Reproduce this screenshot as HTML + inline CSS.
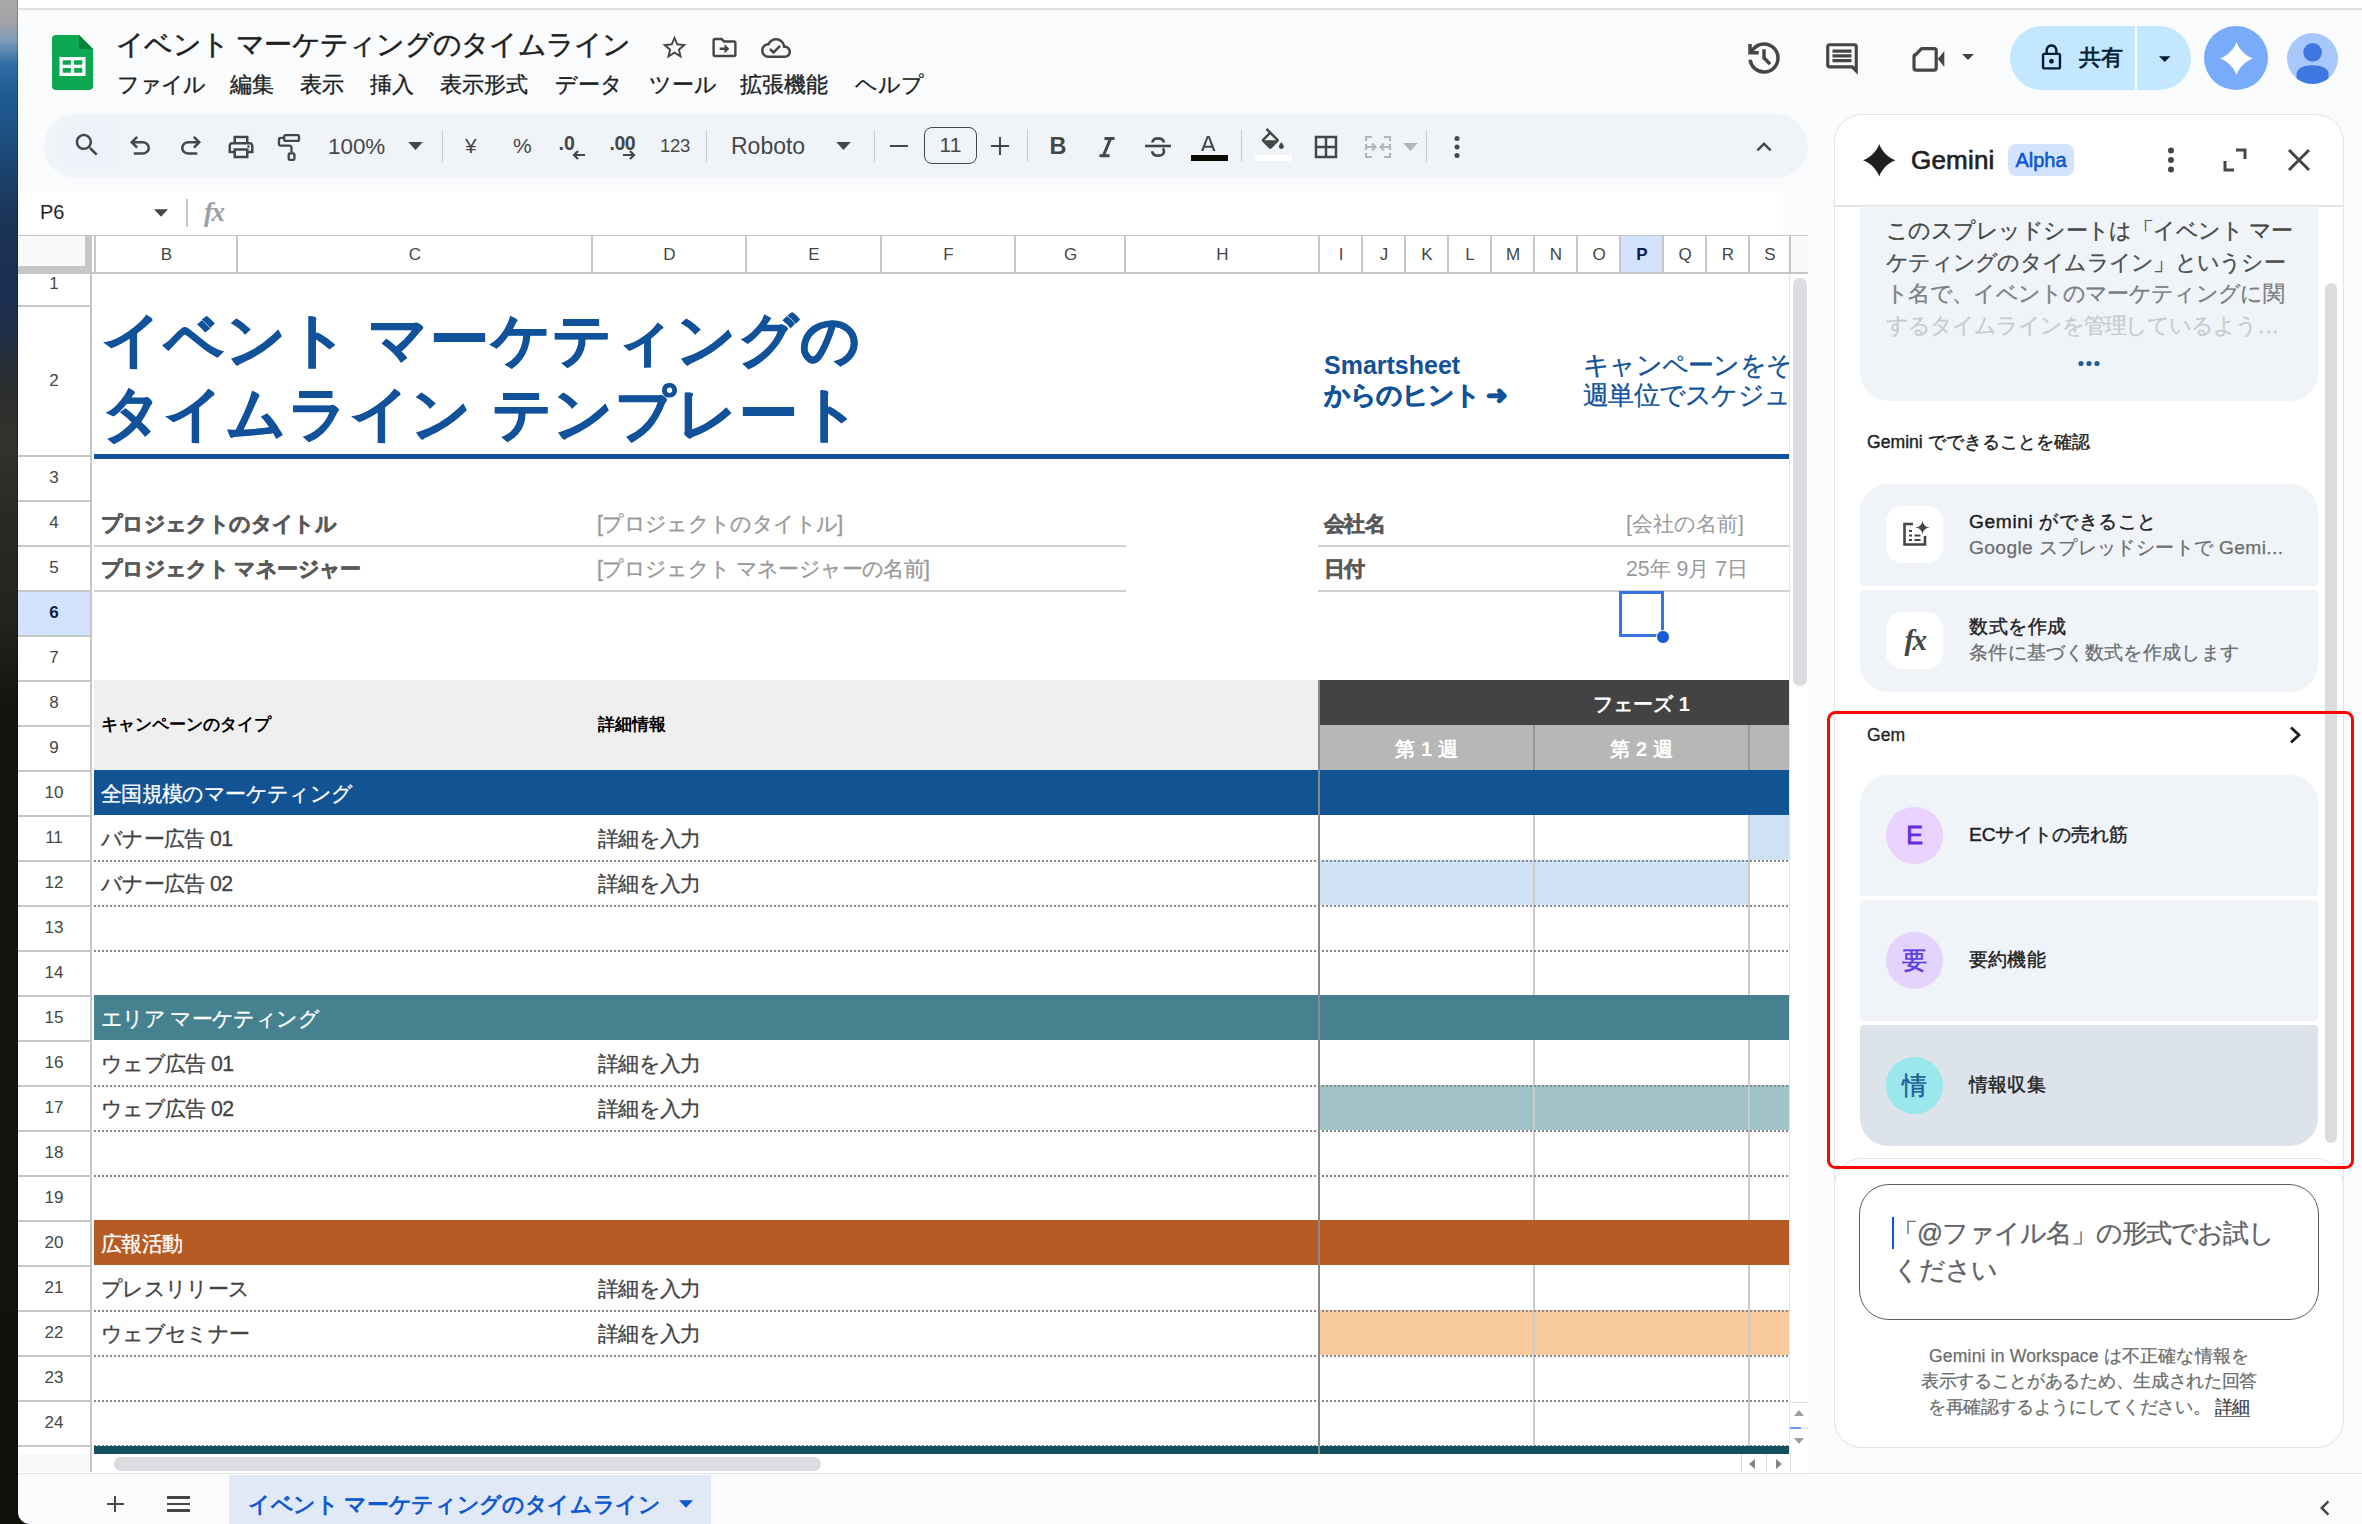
<!DOCTYPE html>
<html lang="ja">
<head>
<meta charset="utf-8">
<title>イベント マーケティングのタイムライン - Google スプレッドシート</title>
<style>
*{box-sizing:border-box;margin:0;padding:0}
html,body{width:2362px;height:1524px;overflow:hidden;background:#f9fbfd}
body{position:relative;font-family:"Liberation Sans",sans-serif;color:#1f1f1f;-webkit-font-smoothing:antialiased}
.abs{position:absolute}
.t{position:absolute;white-space:nowrap;line-height:1}
svg{position:absolute;overflow:visible}
.ic{fill:#444746}
.st{fill:none;stroke:#444746;stroke-width:2.6;stroke-linecap:butt;stroke-linejoin:miter}
/* left wallpaper strip */
#wall{left:0;top:0;width:18px;height:1524px;background:linear-gradient(180deg,#a9aaab 0px,#a3a4a6 22px,#7f9dbd 40px,#2e6aa3 66px,#1f5c93 95px,#1d4a7a 150px,#1b3458 215px,#1b2f52 290px,#20304a 330px,#2b2e2e 385px,#33332d 440px,#2a2a24 520px,#24231d 620px,#15140e 700px,#12110b 1524px)}
#wall:after{content:"";position:absolute;right:0;top:0;width:1px;height:100%;background:rgba(0,0,0,.25)}
#topwhite{left:18px;top:0;width:2344px;height:8px;background:#fff}
#topline{left:18px;top:8px;width:2344px;height:2px;background:#e0e0e0}
/* menu */
.menu{top:73px;font-size:22.4px;height:24px;line-height:24px;color:#1f1f1f;-webkit-text-stroke:.35px #1f1f1f}
/* toolbar */
#tb{left:44px;top:114px;width:1764px;height:64px;border-radius:32px;background:#f0f4f9}
.sep{position:absolute;top:130px;width:1.2px;height:32px;background:#c7c9cc}
.tbt{color:#444746}
/* grid */
.ch{position:absolute;top:236px;height:36px;line-height:37px;text-align:center;font-size:17px;color:#444746;background:#fff;border-right:2px solid #c4c7c5}
.rh{position:absolute;left:18px;width:72px;text-align:center;font-size:17px;color:#444746;background:#fff;border-bottom:2px solid #c4c7c5}
.cell{position:absolute;white-space:nowrap;font-size:21.3px;color:#434343;height:45px;line-height:46px}
.dot{position:absolute;height:2px;background-image:repeating-linear-gradient(90deg,#888 0,#888 2px,transparent 2px,transparent 4px)}
.j{letter-spacing:-.03em;-webkit-text-stroke:.3px currentColor}
.jb{-webkit-text-stroke:.55px currentColor}
.vl{position:absolute;width:2px;background:#ccc}
/* gemini */
.card{position:absolute;left:1860px;width:458px;background:#f0f4f9}
.ct{position:absolute;left:1969px;white-space:nowrap;font-size:19.2px;line-height:24px;height:24px;letter-spacing:-.5px}
.gc{position:absolute;left:1886px;width:57px;height:57px;border-radius:50%;text-align:center;line-height:57px;font-size:25px}
</style>
</head>
<body>
<div id="wall" class="abs"></div>
<div id="topwhite" class="abs"></div>
<div id="topline" class="abs"></div>
<!-- ===== Title bar ===== -->
<svg style="left:52px;top:35px" width="41" height="55" viewBox="0 0 41 55">
  <path d="M4 0H27L41 14V51a4 4 0 0 1-4 4H4a4 4 0 0 1-4-4V4a4 4 0 0 1 4-4Z" fill="#0ca750"/>
  <path d="M27 0L41 14H30a3 3 0 0 1-3-3Z" fill="#08813c"/>
  <path d="M7.5 22h26v19h-26Zm3.200 3.200v4.600h8.200v-4.600Zm11.400 0v4.600h8.200v-4.600Zm-11.400 7.800v4.800h8.200v-4.800Zm11.400 0v4.800h8.200v-4.800Z" fill="#fff" fill-rule="evenodd"/>
</svg>
<div class="t" style="left:116px;top:28px;font-size:28px;letter-spacing:-.75px;height:34px;line-height:34px;color:#1f1f1f;-webkit-text-stroke:.5px #1f1f1f">イベント マーケティングのタイムライン</div>
<svg class="ic" style="left:660px;top:33px" width="29" height="29" viewBox="0 0 24 24"><path d="M22 9.240l-7.190-.62L12 2 9.190 8.630 2 9.240l5.460 4.730L5.820 21 12 17.270 18.180 21l-1.630-7.030L22 9.240zM12 15.400l-3.760 2.270 1-4.280-3.320-2.880 4.380-.38L12 6.100l1.710 4.040 4.380.38-3.320 2.880 1 4.280L12 15.400z"/></svg>
<svg class="ic" style="left:710px;top:33px" width="29" height="29" viewBox="0 0 24 24"><path d="M20 6h-8l-2-2H4c-1.100 0-2 .9-2 2v12c0 1.100.9 2 2 2h16c1.100 0 2-.9 2-2V8c0-1.100-.9-2-2-2zm0 12H4V6h5.170l2 2H20v10zm-8.010-1l4-4-4-4v3h-4v2h4v3z"/></svg>
<svg class="ic" style="left:761px;top:33px" width="30" height="30" viewBox="0 0 24 24"><path d="M19.350 10.040C18.670 6.590 15.640 4 12 4 9.110 4 6.600 5.640 5.350 8.040 2.340 8.360 0 10.910 0 14c0 3.310 2.690 6 6 6h13c2.760 0 5-2.240 5-5 0-2.640-2.050-4.780-4.650-4.960zM19 18H6c-2.210 0-4-1.790-4-4 0-2.050 1.530-3.760 3.560-3.970l1.070-.11.5-.95C8.080 7.140 9.940 6 12 6c2.620 0 4.880 1.860 5.390 4.430l.3 1.500 1.530.11c1.560.1 2.780 1.410 2.780 2.960 0 1.650-1.350 3-3 3zm-9-3.820l-2.090-2.090L6.500 13.500 10 17l6.010-6.010-1.410-1.410z"/></svg>
<!-- menu -->
<div class="t menu" style="left:117px;letter-spacing:-1px">ファイル</div>
<div class="t menu" style="left:230px">編集</div>
<div class="t menu" style="left:300px">表示</div>
<div class="t menu" style="left:370px">挿入</div>
<div class="t menu" style="left:440px">表示形式</div>
<div class="t menu" style="left:555px">データ</div>
<div class="t menu" style="left:649px">ツール</div>
<div class="t menu" style="left:740px">拡張機能</div>
<div class="t menu" style="left:855px">ヘルプ</div>
<!-- right icons -->
<svg class="ic" style="left:1743px;top:36.700px" width="42" height="42" viewBox="0 -960 960 960"><path d="M480-120q-138 0-240.500-91.500T122-440h82q14 104 92.500 172T480-200q117 0 198.500-81.500T760-480q0-117-81.500-198.500T480-760q-69 0-129 32t-101 88h110v80H120v-240h80v94q51-64 124.500-99T480-840q75 0 140.500 28.500t114 77q48.500 48.500 77 114T840-480q0 75-28.500 140.500t-77 114q-48.500 48.500-114 77T480-120Zm112-192L440-464v-216h80v184l128 128-56 56Z"/></svg>
<svg class="ic" style="left:1823.200px;top:39.600px" width="38" height="38" viewBox="0 -960 960 960"><path d="M240-400h480v-80H240v80Zm0-120h480v-80H240v80Zm0-120h480v-80H240v80ZM880-80 720-240H160q-33 0-56.500-23.500T80-320v-480q0-33 23.500-56.500T160-880h640q33 0 56.500 23.500T880-800v720ZM160-320h594l46 45v-525H160v480Z" fill-rule="evenodd"/></svg>
<svg style="left:1910px;top:44px" width="38" height="30" viewBox="0 0 38 30"><path d="M5.500 10.800L10.800 5.300a2 2 0 0 1 1.400-.6H24.200a2 2 0 0 1 2 2V24.100a2 2 0 0 1-2 2H6a2 2 0 0 1-2-2V12.200a2 2 0 0 1 .6-1.400Z" fill="none" stroke="#444746" stroke-width="3.200"/><path d="M27.800 14.900L34.300 7v16Z" fill="#444746"/></svg>
<svg class="ic" style="left:1962px;top:54px" width="12" height="6" viewBox="0 0 10 5"><path d="M0 0h10L5 5Z"/></svg>
<!-- share -->
<div class="abs" style="left:2010px;top:26px;width:181px;height:64px;border-radius:32px;background:#c2e7ff"></div>
<div class="abs" style="left:2135px;top:26px;width:2px;height:64px;background:#f9fbfd"></div>
<svg style="left:2037.200px;top:42.600px" width="29" height="29" viewBox="0 0 24 24" fill="#001d35"><path d="M18 8h-1V6c0-2.760-2.240-5-5-5S7 3.240 7 6v2H6c-1.100 0-2 .9-2 2v10c0 1.100.9 2 2 2h12c1.100 0 2-.9 2-2V10c0-1.100-.9-2-2-2zM9 6c0-1.660 1.340-3 3-3s3 1.340 3 3v2H9V6zm9 14H6V10h12v10zm-6-3c1.100 0 2-.9 2-2s-.9-2-2-2-2 .9-2 2 .9 2 2 2z"/></svg>
<div class="t" style="left:2079px;top:43.500px;font-size:22.400px;letter-spacing:-.4px;height:28px;line-height:28px;color:#001d35;-webkit-text-stroke:.7px #001d35">共有</div>
<svg style="left:2159.400px;top:55.600px" width="11.500" height="6" viewBox="0 0 10 5" fill="#001d35"><path d="M0 0h10L5 5Z"/></svg>
<!-- gemini button -->
<div class="abs" style="left:2204px;top:26px;width:64px;height:64px;border-radius:50%;background:#79abfb"></div>
<svg style="left:2219.500px;top:41.800px" width="33" height="33" viewBox="0 0 24 24" fill="#fff"><path d="M12 0C13.500 5 19 10.500 24 12 19 13.500 13.500 19 12 24 10.500 19 5 13.500 0 12 5 10.500 10.500 5 12 0Z"/></svg>
<!-- avatar -->
<div class="abs" style="left:2287px;top:32.500px;width:51px;height:51px;border-radius:50%;background:#a8c7fa;overflow:hidden"><svg style="left:0;top:0" width="51" height="51" viewBox="0 0 51 51" fill="#3c78e0"><circle cx="25.600" cy="19.300" r="9.300"/><path d="M9.600 41c0-5.500 7-8.700 16-8.700s16 3.200 16 8.700V55H9.600Z"/></svg></div>
<!-- ===== Toolbar ===== -->
<div id="tb" class="abs"></div>
<div class="abs" style="left:58px;top:124px;width:60px;height:44px;border-radius:22px 4px 4px 22px;background:#edf1f9"></div>
<svg class="ic" style="left:72px;top:130px" width="30" height="30" viewBox="0 0 24 24"><path d="M15.500 14h-.79l-.28-.27C15.410 12.590 16 11.110 16 9.500 16 5.910 13.090 3 9.500 3S3 5.910 3 9.500 5.910 16 9.500 16c1.610 0 3.090-.59 4.230-1.570l.27.28v.79l5 4.990L20.490 19l-4.990-5zm-6 0C7.010 14 5 11.990 5 9.500S7.010 5 9.500 5 14 7.010 14 9.500 11.990 14 9.500 14z"/></svg>
<svg class="ic" style="left:125px;top:131px" width="30" height="30" viewBox="0 -960 960 960"><path d="M280-200v-80h284q63 0 109.500-40T720-420q0-60-46.500-100T564-560H312l104 104-56 56-200-200 200-200 56 56-104 104h252q97 0 166.500 63T800-420q0 94-69.500 157T564-200H280Z"/></svg>
<svg class="ic" style="left:176px;top:131px" width="30" height="30" viewBox="0 -960 960 960"><path d="M396-200q-97 0-166.500-63T160-420q0-94 69.500-157T396-640h252L544-744l56-56 200 200-200 200-56-56 104-104H396q-63 0-109.500 40T240-420q0 60 46.500 100T396-280h284v80H396Z"/></svg>
<svg class="ic" style="left:226px;top:132px" width="30" height="30" viewBox="0 0 24 24"><path d="M19 8h-1V3H6v5H5c-1.660 0-3 1.340-3 3v6h4v4h12v-4h4v-6c0-1.660-1.340-3-3-3zM8 5h8v3H8V5zm8 14H8v-4h8v4zm2-4v-2H6v2H4v-4c0-.55.45-1 1-1h14c.55 0 1 .45 1 1v4h-2z"/><circle cx="18" cy="11.500" r="1"/></svg>
<svg style="left:270px;top:125px" width="40" height="40" viewBox="0 0 40 40" fill="none" stroke="#444746" stroke-width="2.300"><rect x="14.200" y="10.200" width="14.800" height="5.600" rx="1.400"/><path d="M14.200 12.900H10.600a1.600 1.600 0 0 0-1.600 1.600V19a1.600 1.600 0 0 0 1.600 1.600H19.300a2.200 2.200 0 0 1 2.200 2.200V27.500"/><rect x="18.700" y="28.300" width="5.700" height="6.600" rx="1.200"/></svg>
<div class="t tbt" style="left:328px;top:134px;font-size:22.4px;height:26px;line-height:26px">100%</div>
<svg class="ic" style="left:408px;top:142px" width="15" height="8" viewBox="0 0 10 5.500"><path d="M0 0h10L5 5.500Z"/></svg>
<div class="sep" style="left:442px"></div>
<div class="t tbt" style="left:465px;top:133px;font-size:21px;height:26px;line-height:26px">¥</div>
<div class="t tbt" style="left:513px;top:133px;font-size:21px;height:26px;line-height:26px">%</div>
<div class="t tbt" style="left:558.500px;top:129.500px;font-size:19.500px;font-weight:bold;height:26px;line-height:26px">.0</div>
<svg class="st" style="left:572px;top:150px" width="14" height="10" viewBox="0 0 14 10"><path d="M13 5H2M6 1L2 5l4 4" stroke-width="2.200"/></svg>
<div class="t tbt" style="left:609.500px;top:129.500px;font-size:19.500px;font-weight:bold;height:26px;line-height:26px;letter-spacing:-.5px">.00</div>
<svg class="st" style="left:622px;top:150px" width="14" height="10" viewBox="0 0 14 10"><path d="M1 5h11M8 1l4 4-4 4" stroke-width="2.200"/></svg>
<div class="t tbt" style="left:660px;top:133px;font-size:18.500px;height:26px;line-height:26px;letter-spacing:-.3px">123</div>
<div class="sep" style="left:706px"></div>
<div class="t tbt" style="left:731px;top:133px;font-size:23px;height:26px;line-height:26px">Roboto</div>
<svg class="ic" style="left:836px;top:142px" width="15" height="8" viewBox="0 0 10 5.500"><path d="M0 0h10L5 5.500Z"/></svg>
<div class="sep" style="left:874px"></div>
<div class="abs" style="left:890px;top:145px;width:18px;height:2.200px;background:#444746"></div>
<div class="abs" style="left:924px;top:127px;width:53px;height:37px;border:1.500px solid #444746;border-radius:8px"></div>
<div class="t tbt" style="left:924px;top:132px;width:53px;text-align:center;font-size:21px;height:26px;line-height:26px">11</div>
<div class="abs" style="left:991px;top:145px;width:18px;height:2.200px;background:#444746"></div>
<div class="abs" style="left:998.900px;top:137px;width:2.200px;height:18px;background:#444746"></div>
<div class="sep" style="left:1027px"></div>
<div class="t tbt" style="left:1049.500px;top:132px;font-size:23.500px;font-weight:bold;height:28px;line-height:28px">B</div>
<svg style="left:1095px;top:134px" width="24" height="26" viewBox="0 0 24 26" fill="none" stroke="#444746" stroke-width="2.700"><path d="M9.500 4.400H19.500M4.500 21.800H14.500M15.600 4.400L8.400 21.800" stroke-width="3"/></svg>
<svg style="left:1144px;top:133px" width="28" height="28" viewBox="0 0 28 28"><path d="M20 9.500C19.500 6.800 17 5.300 14 5.300S8.500 6.900 8.500 9.500M8 18.200c.6 2.900 3 4.500 6 4.500s6-1.500 6-4.300c0-1.200-.5-2.200-1.300-2.900" fill="none" stroke="#444746" stroke-width="2.700"/><rect x="1" y="11.700" width="26" height="2.600" fill="#444746"/></svg>
<svg class="ic" style="left:1201px;top:135.500px" width="14.500" height="15.300" viewBox="0 0 19 20"><path d="M7.700 0L0 19.500h3.100l1.560-4.200h9.680l1.560 4.200H19L11.300 0H7.700zM5.680 12.600L9.500 2.400l3.820 10.200H5.680z"/></svg>
<div class="abs" style="left:1191px;top:155px;width:37px;height:6px;background:#0a0a00"></div>
<div class="sep" style="left:1241px"></div>
<svg class="ic" style="left:1258px;top:128.300px" width="29.500" height="29.500" viewBox="0 0 24 24"><path d="M16.560 8.940L7.620 0 6.210 1.410l2.380 2.380-5.150 5.150c-.59.59-.59 1.540 0 2.120l5.500 5.500c.29.29.68.44 1.060.44s.77-.15 1.060-.44l5.500-5.500c.59-.58.59-1.530 0-2.120zM5.210 10L10 5.210 14.790 10H5.210zM19 11.500s-2 2.170-2 3.500c0 1.100.9 2 2 2s2-.9 2-2c0-1.330-2-3.500-2-3.500z"/></svg>
<div class="abs" style="left:1255px;top:155px;width:37px;height:6px;background:#fff"></div>
<svg class="ic" style="left:1311px;top:132px" width="30" height="30" viewBox="0 0 24 24"><path d="M3 3v18h18V3H3zm8 16H5v-6h6v6zm0-8H5V5h6v6zm8 8h-6v-6h6v6zm0-8h-6V5h6v6z"/></svg>
<svg style="left:1364px;top:135px" width="28" height="24" viewBox="0 0 28 24" fill="none" stroke="#b4b6b5" stroke-width="2.200"><path d="M8 2H2v4M2 9v6M2 18v4h6M20 2h6v4M26 9v6M26 18v4h-6M2 12h9M8 8.500l3.500 3.500L8 15.500M26 12h-9M20 8.500L16.500 12l3.500 3.500"/></svg>
<svg style="left:1403px;top:143px" width="15" height="8" viewBox="0 0 10 5.500" fill="#b4b6b5"><path d="M0 0h10L5 5.500Z"/></svg>
<div class="sep" style="left:1426px"></div>
<svg class="ic" style="left:1452.700px;top:135px" width="8" height="26" viewBox="0 0 8 26"><circle cx="4" cy="3.500" r="2.500"/><circle cx="4" cy="12" r="2.500"/><circle cx="4" cy="20.500" r="2.500"/></svg>
<svg class="ic" style="left:1749px;top:132px" width="30" height="30" viewBox="0 0 24 24"><path d="M12 8l-6 6 1.410 1.410L12 10.830l4.590 4.580L18 14z"/></svg>
<!-- ===== Formula bar ===== -->
<div class="abs" style="left:18px;top:191px;width:1765px;height:44px;background:#fff"></div>
<div class="t" style="left:40px;top:200px;font-size:20px;height:24px;line-height:24px;color:#1f1f1f">P6</div>
<svg class="ic" style="left:154px;top:208.500px" width="14" height="8" viewBox="0 0 10 5.500"><path d="M0 0h10L5 5.500Z"/></svg>
<div class="abs" style="left:186px;top:199px;width:1.500px;height:28px;background:#c7c7c7"></div>
<div class="t" style="left:204px;top:197px;font-family:'Liberation Serif',serif;font-style:italic;font-size:27px;height:30px;line-height:30px;color:#9aa0a6;letter-spacing:-1.500px;font-weight:bold">fx</div>
<!-- ===== Grid ===== -->
<div class="abs" style="left:18px;top:235px;width:1790px;height:1239px;background:#fff"></div>
<div class="abs" style="left:18px;top:235px;width:1790px;height:39px;background:#f8f9fa;border-top:1.5px solid #c4c7c5;border-bottom:2px solid #c4c7c5"></div>
<div class="abs" style="left:18px;top:236px;width:74px;height:37px;background:#f8f9fa;border-right:7px solid #c4c7c5;border-bottom:7px solid #c4c7c5"></div>
<div class="abs" style="left:92px;top:236px;width:2px;height:36px;background:#fff"></div>
<div class="abs" style="left:94px;top:236px;width:2px;height:36px;background:#c4c7c5"></div>
<div class="ch" style="left:96px;width:142px;padding-left:1px">B</div>
<div class="ch" style="left:238px;width:355px;padding-left:1px">C</div>
<div class="ch" style="left:593px;width:154px;padding-left:1px">D</div>
<div class="ch" style="left:747px;width:135px;padding-left:1px">E</div>
<div class="ch" style="left:882px;width:134px;padding-left:1px">F</div>
<div class="ch" style="left:1016px;width:110px;padding-left:1px">G</div>
<div class="ch" style="left:1126px;width:194px;padding-left:1px">H</div>
<div class="ch" style="left:1320px;width:43px;padding-left:1px">I</div>
<div class="ch" style="left:1363px;width:43px;padding-left:1px">J</div>
<div class="ch" style="left:1406px;width:43px;padding-left:1px">K</div>
<div class="ch" style="left:1449px;width:43px;padding-left:1px">L</div>
<div class="ch" style="left:1492px;width:43px;padding-left:1px">M</div>
<div class="ch" style="left:1535px;width:43px;padding-left:1px">N</div>
<div class="ch" style="left:1578px;width:43px;padding-left:1px">O</div>
<div class="ch" style="left:1621px;width:43px;background:#d3e3fd;color:#041e49;font-weight:bold;padding-left:1px">P</div>
<div class="ch" style="left:1664px;width:43px;padding-left:1px">Q</div>
<div class="ch" style="left:1707px;width:43px;padding-left:1px">R</div>
<div class="ch" style="left:1750px;width:41px;padding-left:1px">S</div>
<div class="abs" style="left:18px;top:274px;width:74px;height:1200px;background:#fff;border-right:2px solid #c4c7c5"></div>
<div class="rh" style="top:274px;height:33px;line-height:20px">1</div>
<div class="rh" style="top:307px;height:150px;line-height:147px">2</div>
<div class="rh" style="top:457px;height:45px;line-height:42px">3</div>
<div class="rh" style="top:502px;height:45px;line-height:42px">4</div>
<div class="rh" style="top:547px;height:45px;line-height:42px">5</div>
<div class="rh" style="top:592px;height:45px;line-height:42px;background:#d3e3fd;color:#041e49;font-weight:bold">6</div>
<div class="rh" style="top:637px;height:45px;line-height:42px">7</div>
<div class="rh" style="top:682px;height:45px;line-height:42px">8</div>
<div class="rh" style="top:727px;height:45px;line-height:42px">9</div>
<div class="rh" style="top:772px;height:45px;line-height:42px">10</div>
<div class="rh" style="top:817px;height:45px;line-height:42px">11</div>
<div class="rh" style="top:862px;height:45px;line-height:42px">12</div>
<div class="rh" style="top:907px;height:45px;line-height:42px">13</div>
<div class="rh" style="top:952px;height:45px;line-height:42px">14</div>
<div class="rh" style="top:997px;height:45px;line-height:42px">15</div>
<div class="rh" style="top:1042px;height:45px;line-height:42px">16</div>
<div class="rh" style="top:1087px;height:45px;line-height:42px">17</div>
<div class="rh" style="top:1132px;height:45px;line-height:42px">18</div>
<div class="rh" style="top:1177px;height:45px;line-height:42px">19</div>
<div class="rh" style="top:1222px;height:45px;line-height:42px">20</div>
<div class="rh" style="top:1267px;height:45px;line-height:42px">21</div>
<div class="rh" style="top:1312px;height:45px;line-height:42px">22</div>
<div class="rh" style="top:1357px;height:45px;line-height:42px">23</div>
<div class="rh" style="top:1402px;height:45px;line-height:42px">24</div>
<div class="rh" style="top:1447px;height:33px;line-height:30px">25</div>
<div class="t" style="left:102px;top:302.7px;font-size:58.6px;color:#11529a;height:74px;line-height:74px;-webkit-text-stroke:2.9px #11529a;paint-order:stroke fill;text-shadow:.7px 0 #11529a,-.7px 0 #11529a,0 .7px #11529a,0 -.7px #11529a;letter-spacing:1.9px">イベント マーケティングの</div>
<div class="t" style="left:102px;top:376.5px;font-size:58.6px;color:#11529a;height:74px;line-height:74px;-webkit-text-stroke:2.9px #11529a;paint-order:stroke fill;text-shadow:.7px 0 #11529a,-.7px 0 #11529a,0 .7px #11529a,0 -.7px #11529a;letter-spacing:1.9px">タイムライン テンプレート</div>
<div class="t" style="left:1324px;top:350px;font-size:25px;font-weight:bold;color:#11529a;height:30px;line-height:30px">Smartsheet</div>
<div class="t" style="left:1324px;top:380px;font-size:25.5px;font-weight:bold;color:#11529a;height:30px;line-height:30px;letter-spacing:-1px;-webkit-text-stroke:.5px #11529a">からのヒント ➜</div>
<div class="abs" style="left:1583px;top:350px;width:206px;height:60px;overflow:hidden"><div class="t" style="left:0;top:0;font-size:25.5px;color:#11529a;height:30px;line-height:30px;letter-spacing:-.75px;-webkit-text-stroke:.3px #11529a">キャンペーンをそれぞれ</div><div class="t" style="left:0;top:30px;font-size:25.5px;color:#11529a;height:30px;line-height:30px;letter-spacing:-.75px;-webkit-text-stroke:.3px #11529a">週単位でスケジュール</div></div>
<div class="abs" style="left:94px;top:454px;width:1695px;height:4.5px;background:#11529a"></div>
<div class="cell j jb" style="left:101px;top:501px;font-weight:bold;color:#595959">プロジェクトのタイトル</div>
<div class="cell j" style="left:597px;top:501px;color:#999">[プロジェクトのタイトル]</div>
<div class="cell j jb" style="left:1324px;top:501px;font-weight:bold;color:#595959">会社名</div>
<div class="cell" style="left:1626px;top:501px;color:#999">[会社の名前]</div>
<div class="abs" style="left:94px;top:545px;width:1032px;height:2px;background:#cfcfcf"></div>
<div class="abs" style="left:1318px;top:545px;width:471px;height:2px;background:#cfcfcf"></div>
<div class="cell j jb" style="left:101px;top:546px;font-weight:bold;color:#595959">プロジェクト マネージャー</div>
<div class="cell j" style="left:597px;top:546px;color:#999">[プロジェクト マネージャーの名前]</div>
<div class="cell j jb" style="left:1324px;top:546px;font-weight:bold;color:#595959">日付</div>
<div class="cell" style="left:1626px;top:546px;color:#999">25年 9月 7日</div>
<div class="abs" style="left:94px;top:590px;width:1032px;height:2px;background:#cfcfcf"></div>
<div class="abs" style="left:1318px;top:590px;width:471px;height:2px;background:#cfcfcf"></div>
<div class="abs" style="left:94px;top:680px;width:1225px;height:90px;background:#efefef"></div>
<div class="t" style="left:101px;top:713px;font-size:17px;font-weight:bold;color:#000;height:24px;line-height:24px">キャンペーンのタイプ</div>
<div class="t" style="left:598px;top:713px;font-size:17px;font-weight:bold;color:#000;height:24px;line-height:24px">詳細情報</div>
<div class="abs" style="left:1319px;top:680px;width:470px;height:45px;background:#434343"></div>
<div class="abs" style="left:1319px;top:725px;width:470px;height:45px;background:#b7b7b7"></div>
<div class="t" style="left:1534px;top:691px;width:215px;text-align:center;font-size:20px;font-weight:bold;color:#fff;height:26px;line-height:26px">フェーズ 1</div>
<div class="t" style="left:1319px;top:736px;width:215px;text-align:center;font-size:20px;font-weight:bold;color:#fff;height:26px;line-height:26px">第 1 週</div>
<div class="t" style="left:1534px;top:736px;width:215px;text-align:center;font-size:20px;font-weight:bold;color:#fff;height:26px;line-height:26px">第 2 週</div>
<div class="vl" style="left:1533px;top:725px;height:45px;background:#999"></div>
<div class="vl" style="left:1748px;top:725px;height:45px;background:#999"></div>
<div class="abs" style="left:1749px;top:815px;width:40px;height:45px;background:#cfe2f3"></div>
<div class="abs" style="left:1320px;top:860px;width:429px;height:45px;background:#cfe2f3"></div>
<div class="abs" style="left:1320px;top:1085px;width:469px;height:45px;background:#a2c4c9"></div>
<div class="abs" style="left:1320px;top:1310px;width:469px;height:45px;background:#f9cb9c"></div>
<div class="vl" style="left:1533px;top:770px;height:676px"></div>
<div class="vl" style="left:1748px;top:770px;height:676px"></div>
<div class="abs" style="left:94px;top:770px;width:1695px;height:45px;background:#125394"></div>
<div class="cell j" style="left:101px;top:771px;color:#fff">全国規模のマーケティング</div>
<div class="cell j" style="left:101px;top:816px">バナー広告 01</div>
<div class="cell j" style="left:598px;top:816px">詳細を入力</div>
<div class="dot" style="left:94px;top:860px;width:1695px"></div>
<div class="cell j" style="left:101px;top:861px">バナー広告 02</div>
<div class="cell j" style="left:598px;top:861px">詳細を入力</div>
<div class="dot" style="left:94px;top:905px;width:1695px"></div>
<div class="dot" style="left:94px;top:950px;width:1695px"></div>
<div class="abs" style="left:94px;top:995px;width:1695px;height:45px;background:#45818e"></div>
<div class="cell j" style="left:101px;top:996px;color:#fff">エリア マーケティング</div>
<div class="cell j" style="left:101px;top:1041px">ウェブ広告 01</div>
<div class="cell j" style="left:598px;top:1041px">詳細を入力</div>
<div class="dot" style="left:94px;top:1085px;width:1695px"></div>
<div class="cell j" style="left:101px;top:1086px">ウェブ広告 02</div>
<div class="cell j" style="left:598px;top:1086px">詳細を入力</div>
<div class="dot" style="left:94px;top:1130px;width:1695px"></div>
<div class="dot" style="left:94px;top:1175px;width:1695px"></div>
<div class="abs" style="left:94px;top:1220px;width:1695px;height:45px;background:#b55b23"></div>
<div class="cell j" style="left:101px;top:1221px;color:#fff">広報活動</div>
<div class="cell j" style="left:101px;top:1266px">プレスリリース</div>
<div class="cell j" style="left:598px;top:1266px">詳細を入力</div>
<div class="dot" style="left:94px;top:1310px;width:1695px"></div>
<div class="cell j" style="left:101px;top:1311px">ウェブセミナー</div>
<div class="cell j" style="left:598px;top:1311px">詳細を入力</div>
<div class="dot" style="left:94px;top:1355px;width:1695px"></div>
<div class="dot" style="left:94px;top:1400px;width:1695px"></div>
<div class="dot" style="left:94px;top:1445px;width:1695px"></div>
<div class="abs" style="left:94px;top:1446px;width:1695px;height:8px;background:#134f5c"></div>
<div class="abs" style="left:1318px;top:680px;width:2px;height:774px;background:#8a8a8a"></div>
<div class="abs" style="left:1619px;top:591px;width:45px;height:46px;border:3px solid #3a73e4"></div>
<div class="abs" style="left:1656px;top:629.5px;width:14px;height:14px;border-radius:50%;background:#1b57d9;border:1px solid #fff"></div>
<div class="abs" style="left:1789px;top:274px;width:1px;height:1180px;background:#e3e3e3"></div>
<div class="abs" style="left:1793px;top:278px;width:14px;height:408px;border-radius:7px;background:#dadce0"></div>
<div class="abs" style="left:1790px;top:1402px;width:18px;height:52px;border-top:1px solid #dadce0"></div>
<div class="abs" style="left:1790px;top:1428px;width:18px;height:1px;background:#dadce0"></div><div class="abs" style="left:1790px;top:1427px;width:11px;height:1.5px;background:#6a9bf4"></div>
<svg style="left:1794px;top:1410px" width="10" height="6" viewBox="0 0 10 6" fill="#9aa0a6"><path d="M0 6h10L5 0Z"/></svg>
<svg style="left:1794px;top:1438px" width="10" height="6" viewBox="0 0 10 6" fill="#9aa0a6"><path d="M0 0h10L5 6Z"/></svg>
<div class="abs" style="left:18px;top:1454px;width:1790px;height:20px;background:#fff"></div>
<div class="abs" style="left:18px;top:1454px;width:72px;height:18px;background:#f8f9fa"></div>
<div class="abs" style="left:90px;top:1454px;width:2px;height:18px;background:#c4c7c5"></div>
<div class="abs" style="left:114px;top:1457px;width:707px;height:14px;border-radius:7px;background:#dadce0"></div>
<div class="abs" style="left:1741px;top:1454px;width:50px;height:18px;border-left:1px solid #dadce0;border-right:1px solid #dadce0"></div><div class="abs" style="left:1766px;top:1454px;width:1px;height:18px;background:#dadce0"></div>
<svg style="left:1749px;top:1459px" width="6" height="10" viewBox="0 0 6 10" fill="#80868b"><path d="M6 0v10L0 5Z"/></svg>
<svg style="left:1776px;top:1459px" width="6" height="10" viewBox="0 0 6 10" fill="#80868b"><path d="M0 0v10L6 5Z"/></svg>
<div class="abs" style="left:1808px;top:235px;width:30px;height:1239px;background:#f9fbfd"></div>
<div class="abs" style="left:18px;top:1473px;width:2344px;height:51px;background:#f9fbfd;border-top:1.5px solid #e1e3e6"></div>
<div class="abs" style="left:107px;top:1502.7px;width:16.5px;height:2.6px;background:#444746"></div><div class="abs" style="left:113.9px;top:1495.7px;width:2.6px;height:16.5px;background:#444746"></div>
<div class="abs" style="left:167px;top:1496px;width:23px;height:2.6px;background:#444746"></div><div class="abs" style="left:167px;top:1502.7px;width:23px;height:2.6px;background:#444746"></div><div class="abs" style="left:167px;top:1509.4px;width:23px;height:2.6px;background:#444746"></div>
<div class="abs" style="left:229px;top:1475px;width:482px;height:49px;background:#e1e9f7"></div>
<div class="t" style="left:248px;top:1491px;font-size:22.4px;letter-spacing:-.35px;color:#0b57d0;height:28px;line-height:28px;-webkit-text-stroke:.85px #0b57d0">イベント マーケティングのタイムライン</div>
<svg style="left:679px;top:1500px" width="14" height="8" viewBox="0 0 10 5.5" fill="#0b57d0"><path d="M0 0h10L5 5.5Z"/></svg>
<svg class="ic" style="left:2310px;top:1493px" width="30" height="30" viewBox="0 0 24 24"><path d="M15.41 7.41L14 6l-6 6 6 6 1.410-1.410L10.830 12z"/></svg>
<svg style="left:18px;top:1512px" width="12" height="12" viewBox="0 0 12 12"><path d="M0 0V12H12A12 12 0 0 1 0 0Z" fill="#12110b"/></svg>
<!-- ===== Gemini panel ===== -->
<div class="abs" style="left:1834px;top:114px;width:510px;height:1334px;border-radius:28px;background:#fff;border:1.500px solid #e1e3e6"></div>
<div class="abs" style="left:1835px;top:205px;width:508px;height:1.500px;background:#e1e3e6"></div>
<svg style="left:1862.800px;top:144px" width="32.500" height="32.500" viewBox="0 0 24 24" fill="#1f1f1f"><path d="M12 0C13.500 5 19 10.500 24 12 19 13.500 13.500 19 12 24 10.500 19 5 13.500 0 12 5 10.500 10.500 5 12 0Z"/></svg>
<div class="t" style="left:1911px;top:143px;font-size:26px;height:34px;line-height:34px;color:#1f1f1f;-webkit-text-stroke:.7px #1f1f1f;letter-spacing:.2px">Gemini</div>
<div class="abs" style="left:2008px;top:144px;width:66px;height:32px;border-radius:8px;background:#d3e3fd"></div>
<div class="t" style="left:2008px;top:146px;width:66px;text-align:center;font-size:20px;height:28px;line-height:28px;color:#0b57d0;-webkit-text-stroke:.55px #0b57d0">Alpha</div>
<svg class="ic" style="left:2167px;top:147px" width="8" height="26" viewBox="0 0 8 26"><circle cx="4" cy="3.500" r="3"/><circle cx="4" cy="13" r="3"/><circle cx="4" cy="22.500" r="3"/></svg>
<svg style="left:2223px;top:148px" width="24" height="24" viewBox="0 0 24 24" fill="none" stroke="#444746" stroke-width="3"><path d="M13 2h9v9M2 13v9h9"/></svg>
<svg style="left:2288px;top:149px" width="22" height="22" viewBox="0 0 22 22" fill="none" stroke="#444746" stroke-width="3"><path d="M1 1l20 20M21 1L1 21"/></svg>
<!-- summary box -->
<div class="abs" style="left:1860px;top:206px;width:458px;height:195px;border-radius:0 0 28px 28px;background:#f0f4f9"></div>
<div class="t" style="left:1886px;top:215px;font-size:22.400px;letter-spacing:-.56px;-webkit-text-stroke:.3px #444746;height:32px;line-height:32px;color:#444746">このスプレッドシートは「イベント マー</div>
<div class="t" style="left:1886px;top:246.500px;font-size:22.400px;letter-spacing:-.72px;-webkit-text-stroke:.3px #4c4f4e;height:32px;line-height:32px;color:#4c4f4e">ケティングのタイムライン」というシー</div>
<div class="t" style="left:1886px;top:278px;font-size:22.400px;letter-spacing:-.66px;-webkit-text-stroke:.3px #7c7f7e;height:32px;line-height:32px;color:#7c7f7e">ト名で、イベントのマーケティングに関</div>
<div class="t" style="left:1886px;top:309.500px;font-size:22.400px;letter-spacing:-1.050px;-webkit-text-stroke:.3px #c9cccd;height:32px;line-height:32px;color:#c9cccd">するタイムラインを管理しているよう…</div>
<svg style="left:2078px;top:360px" width="22" height="7" viewBox="0 0 22 7" fill="#1f6098"><circle cx="3" cy="3.500" r="2.600"/><circle cx="11" cy="3.500" r="2.600"/><circle cx="19" cy="3.500" r="2.600"/></svg>
<div class="t" style="left:1867px;top:429px;font-size:17.600px;height:26px;line-height:26px;color:#1f1f1f;-webkit-text-stroke:.4px #1f1f1f">Gemini でできることを確認</div>
<!-- capability cards -->
<div class="card" style="top:484px;height:102px;border-radius:28px 28px 4px 4px"></div>
<div class="card" style="top:590px;height:102px;border-radius:4px 4px 28px 28px"></div>
<div class="abs" style="left:1886px;top:506px;width:57px;height:57px;border-radius:16px;background:#fff"></div>
<div class="abs" style="left:1886px;top:612px;width:57px;height:57px;border-radius:16px;background:#fff"></div>
<svg style="left:1901px;top:519px" width="30" height="30" viewBox="0 0 30 30" fill="none" stroke="#444746" stroke-width="2.600"><path d="M12 5H3.500v20.500H24V17"/><path d="M8 12h3M8 16.500h3M8 21h3M13.500 16.500h6M13.500 21h6" stroke-width="2.200"/><path d="M21.500 1c0 4.200 3.300 7.500 7.500 7.500-4.200 0-7.500 3.300-7.500 7.500 0-4.200-3.300-7.500-7.500-7.500 4.200 0 7.500-3.300 7.500-7.500Z" fill="#444746" stroke="none"/></svg>
<div class="t" style="left:1897px;top:623px;width:36px;text-align:center;font-family:'Liberation Serif',serif;font-style:italic;font-weight:bold;font-size:29px;height:34px;line-height:34px;color:#444746;letter-spacing:-1.500px">fx</div>
<div class="ct" style="letter-spacing:.6px;top:510px;color:#1f1f1f;-webkit-text-stroke:.42px #1f1f1f">Gemini ができること</div>
<div class="ct" style="letter-spacing:.38px;top:535.500px;color:#6b6e6d;-webkit-text-stroke:.25px #6b6e6d">Google スプレッドシートで Gemi...</div>
<div class="ct" style="letter-spacing:.5px;top:615px;color:#1f1f1f;-webkit-text-stroke:.42px #1f1f1f">数式を作成</div>
<div class="ct" style="letter-spacing:.3px;top:640.500px;color:#6b6e6d;-webkit-text-stroke:.25px #6b6e6d">条件に基づく数式を作成します</div>
<!-- Gem header -->
<div class="t" style="left:1867px;top:722px;font-size:17.600px;height:26px;line-height:26px;color:#1f1f1f;-webkit-text-stroke:.3px #1f1f1f">Gem</div>
<svg style="left:2289px;top:726px" width="12" height="18" viewBox="0 0 12 18" fill="none" stroke="#1f1f1f" stroke-width="2.800"><path d="M2 1.500l8 7.500-8 7.500"/></svg>
<!-- Gem cards -->
<div class="card" style="top:775px;height:121px;border-radius:28px 28px 4px 4px"></div>
<div class="card" style="top:900px;height:121px;border-radius:4px"></div>
<div class="card" style="top:1025px;height:121px;border-radius:4px 4px 28px 28px;background:#dde3ea"></div>
<div class="gc" style="top:807px;background:#e9d2fd;color:#6a2be0;-webkit-text-stroke:.8px #6a2be0">E</div>
<div class="gc" style="top:932px;background:#e4d3fc;color:#5a3ee0;-webkit-text-stroke:.5px #5a3ee0">要</div>
<div class="gc" style="top:1057px;background:#9ae7ec;color:#1f5f99;-webkit-text-stroke:.5px #1f5f99">情</div>
<div class="ct" style="letter-spacing:-.1px;top:823px;color:#1f1f1f;-webkit-text-stroke:.42px #1f1f1f">ECサイトの売れ筋</div>
<div class="ct" style="letter-spacing:.2px;top:948px;color:#1f1f1f;-webkit-text-stroke:.42px #1f1f1f">要約機能</div>
<div class="ct" style="letter-spacing:.2px;top:1073px;color:#1f1f1f;-webkit-text-stroke:.42px #1f1f1f">情報収集</div>
<!-- panel scrollbar -->
<div class="abs" style="left:2324.500px;top:283px;width:12px;height:860px;border-radius:6px;background:#dadce0"></div>
<!-- footer section -->
<div class="abs" style="left:1834px;top:1158px;width:510px;height:290px;border-radius:28px;background:#fff;border:1.500px solid #e1e3e6"></div>
<div class="abs" style="left:1859px;top:1184px;width:460px;height:136px;border-radius:30px;border:1.500px solid #5a5d5c;background:#fff"></div>
<div class="abs" style="left:1892px;top:1217px;width:2px;height:32px;background:#0b57d0"></div>
<div class="t" style="left:1892px;top:1213.500px;font-size:25.600px;letter-spacing:-1.050px;-webkit-text-stroke:.3px #5f6368;height:38px;line-height:38px;color:#5f6368">「@ファイル名」の形式でお試し</div>
<div class="t" style="left:1893px;top:1251px;font-size:25.600px;letter-spacing:-1.050px;-webkit-text-stroke:.3px #5f6368;height:38px;line-height:38px;color:#5f6368">ください</div>
<div class="t" style="left:1860px;top:1344px;width:458px;text-align:center;font-size:17.600px;height:25.400px;line-height:25.400px;color:#6b6e6d;-webkit-text-stroke:.25px #6b6e6d;letter-spacing:.15px">Gemini in Workspace は不正確な情報を</div>
<div class="t" style="left:1860px;top:1369.400px;width:458px;text-align:center;font-size:17.600px;height:25.400px;line-height:25.400px;color:#6b6e6d;-webkit-text-stroke:.25px #6b6e6d;letter-spacing:-.3px">表示することがあるため、生成された回答</div>
<div class="t" style="left:1860px;top:1394.800px;width:458px;text-align:center;font-size:17.600px;height:25.400px;line-height:25.400px;color:#6b6e6d;-webkit-text-stroke:.25px #6b6e6d;letter-spacing:-.35px">を再確認するようにしてください。 <span style="color:#1f1f1f;text-decoration:underline;text-underline-offset:3px">詳細</span></div>
<!-- red annotation box -->
<div class="abs" style="left:1827px;top:711px;width:527px;height:458px;border:3.100px solid #fe0300;border-radius:8.500px"></div>
</body>
</html>
